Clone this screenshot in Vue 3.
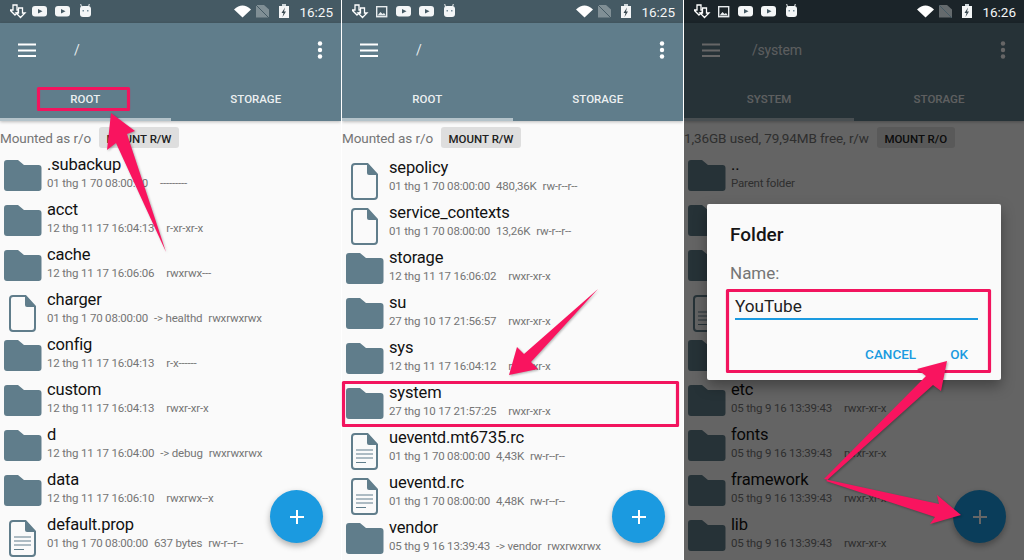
<template>
  <div class="shots">
    <section v-for="p in panels" :key="p.id" class="phone">
      <div class="statusbar" :class="{ dim: p.dialog }">
        <div class="notif">
          <template v-for="(ic, i) in p.icons" :key="i">
            <svg v-if="ic === 'dl'" width="22" height="23" viewBox="0 0 22 23">
              <path d="M3 5h4v5h3l-5 5-5-5h3z" fill="none" stroke="#fff" stroke-width="1.3" />
              <path d="M8.500 8h4v5h2.500l-4.500 4.500-4.500-4.500h2.500z" :fill="p.dialog ? '#1b2429' : '#455a64'" stroke="#fff" stroke-width="1.3" />
            </svg>
            <svg v-else-if="ic === 'img'" width="22" height="23" viewBox="0 0 22 23">
              <rect x="2.700" y="6.700" width="10" height="10" fill="none" stroke="#e8ecee" stroke-width="1.400" />
              <path d="M3.500 15.500l3-3.500 2 2 1.500-1 2 2.500z" fill="#e8ecee" />
            </svg>
            <svg v-else-if="ic === 'yt'" width="23" height="23" viewBox="0 0 23 23">
              <rect x="0" y="6" width="15" height="10.500" rx="3" fill="#f4f6f7" />
              <path d="M6 9l4.500 2.300L6 13.600z" fill="#455a64" />
            </svg>
            <svg v-else width="14" height="23" viewBox="0 0 14 23">
              <path d="M3.500 7L2.700 4M10.500 7l.8-3" stroke="#eef1f2" stroke-width="1" />
              <rect x="2" y="6" width="11" height="11" rx="3" fill="#f4f6f7" />
              <rect x="4.500" y="10" width="1.500" height="1.500" fill="#78909c" />
              <rect x="9" y="10" width="1.500" height="1.500" fill="#78909c" />
            </svg>
          </template>
        </div>
        <div class="sysicons">
          <svg width="55" height="23" viewBox="0 0 55 23">
            <path d="M0 9.500Q8.500 1.500 17 9.500L8.500 17.500z" fill="#fff" />
            <path d="M22 5h8l5 4.500V17.500H22z" fill="#fff" opacity=".32" />
            <path d="M22 5l13 13" stroke="#455a64" stroke-width="1" />
            <rect x="48" y="4" width="4" height="2" fill="#cfd8dc" />
            <rect x="45" y="6" width="10" height="12" fill="#f4f6f7" />
            <path d="M51 7.500l-3.500 5.500h2l-1 4 3.500-5.500h-2z" fill="#37474f" />
          </svg>
          <span class="clock">{{ p.time }}</span>
        </div>
      </div>

      <div class="body">
        <header class="appbar">
          <div class="toolbar">
            <svg class="burger" width="18" height="14" viewBox="0 0 18 14">
              <path d="M0 1.500h18M0 7.500h18M0 13h18" stroke="#fff" stroke-width="2" />
            </svg>
            <span class="path" :class="{ rootpath: p.path === '/' }">{{ p.path }}</span>
            <svg class="dots" width="6" height="18" viewBox="0 0 6 18">
              <circle cx="3" cy="2.500" r="2.200" fill="#fff" />
              <circle cx="3" cy="9" r="2.200" fill="#fff" />
              <circle cx="3" cy="15.500" r="2.200" fill="#fff" />
            </svg>
          </div>
          <div class="tabs">
            <div class="tab active">{{ p.tab }}</div>
            <div class="tab">STORAGE</div>
          </div>
        </header>

        <div class="mountbar">
          <span class="mountinfo">{{ p.info }}</span>
          <button class="mountbtn">{{ p.btn }}</button>
        </div>

        <ul class="list" :class="{ scrolled: p.id === 2 }">
          <li v-for="(r, i) in p.rows" :key="i" class="row">
            <div class="rowicon">
              <svg v-if="r.type === 'dir'" width="38" height="31" viewBox="0 0 38 31">
                <path d="M3 0h11l6 5h14.500a3 3 0 0 1 3 3v20a3 3 0 0 1-3 3H3a3 3 0 0 1-3-3V3a3 3 0 0 1 3-3z" fill="#607d8b" />
              </svg>
              <svg v-else class="fileicon" width="27" height="37" viewBox="0 0 27 37">
                <path d="M4 1h12.500L26 11.500V33a3 3 0 0 1-3 3H4a3 3 0 0 1-3-3V4a3 3 0 0 1 3-3z" fill="none" stroke="#607d8b" stroke-width="2" />
                <path d="M16 1l10 11h-8a2 2 0 0 1-2-2z" fill="#607d8b" />
                <path v-if="r.type === 'doc'" d="M5 17h17M5 21h17M5 25h17M5 29.500h10" stroke="#607d8b" stroke-width="1.200" />
              </svg>
            </div>
            <div v-if="r.name" class="rowtext">
              <div class="name">{{ r.name }}</div>
              <div class="meta">
                <span>{{ r.date }}</span>
                <span v-if="r.size !== null">{{ r.size }}</span>
                <span>{{ r.perm }}</span>
              </div>
            </div>
          </li>
        </ul>

        <button class="fab">
          <svg width="16" height="16" viewBox="0 0 16 16">
            <path d="M8 1v14M1 8h14" stroke="#fff" stroke-width="2" />
          </svg>
        </button>

        <template v-if="p.dialog">
          <div class="scrim"></div>
          <div class="dialog">
            <h3 class="dlgtitle">Folder</h3>
            <div class="dlglabel">Name:</div>
            <div class="dlgfield">YouTube</div>
            <div class="dlgactions">
              <span>CANCEL</span>
              <span>OK</span>
            </div>
          </div>
        </template>
      </div>
    </section>

    <svg class="marks" width="1024" height="560" viewBox="0 0 1024 560">
      <g fill="none" stroke="#f2145e" stroke-width="3.200" stroke-linejoin="round">
        <rect x="38.500" y="88.500" width="90" height="21" />
        <rect x="343.500" y="382.500" width="334" height="43" />
        <rect x="727.500" y="290.500" width="262" height="81" />
      </g>
      <g fill="#f9145f" class="arrows">
        <polygon points="111,113 135,131 127,134 166,252 116,143 107,150" />
        <polygon points="509,375 517,347 524,354 598,289 531,362 538,369" />
        <polygon points="947,361 917,369 926,376 824,479 939,504 937,495 961,515 930,524 935,517 826,481 933,385 941,391" />
      </g>
    </svg>
  </div>
</template>

<script setup>
const dir = (name, date, perm, size = '') => ({ type: 'dir', name, date, perm, size })
const file = (name, date, size, perm) => ({ type: 'file', name, date, perm, size })
const doc = (name, date, size, perm) => ({ type: 'doc', name, date, perm, size })

const epoch = '01 thg 1 70 08:00:00'
const sys = '05 thg 9 16 13:39:43'

const panels = [
  {
    id: 1,
    icons: ['dl', 'yt', 'yt', 'bot'],
    time: '16:25',
    path: '/',
    tab: 'ROOT',
    info: 'Mounted as r/o',
    btn: 'MOUNT R/W',
    rows: [
      dir('.subackup', epoch, '---------'),
      dir('acct', '12 thg 11 17 16:04:13', 'r-xr-xr-x'),
      dir('cache', '12 thg 11 17 16:06:06', 'rwxrwx---'),
      file('charger', epoch, '-> healthd', 'rwxrwxrwx'),
      dir('config', '12 thg 11 17 16:04:13', 'r-x------'),
      dir('custom', '12 thg 11 17 16:04:13', 'rwxr-xr-x'),
      dir('d', '12 thg 11 17 16:04:00', 'rwxrwxrwx', '-> debug'),
      dir('data', '12 thg 11 17 16:06:10', 'rwxrwx--x'),
      doc('default.prop', epoch, '637 bytes', 'rw-r--r--')
    ]
  },
  {
    id: 2,
    icons: ['dl', 'img', 'yt', 'yt', 'bot'],
    time: '16:25',
    path: '/',
    tab: 'ROOT',
    info: 'Mounted as r/o',
    btn: 'MOUNT R/W',
    rows: [
      file('sepolicy', epoch, '480,36K', 'rw-r--r--'),
      file('service_contexts', epoch, '13,26K', 'rw-r--r--'),
      dir('storage', '12 thg 11 17 16:06:02', 'rwxr-xr-x'),
      dir('su', '27 thg 10 17 21:56:57', 'rwxr-xr-x'),
      dir('sys', '12 thg 11 17 16:04:12', 'rwxr-xr-x'),
      dir('system', '27 thg 10 17 21:57:25', 'rwxr-xr-x'),
      doc('ueventd.mt6735.rc', epoch, '4,43K', 'rw-r--r--'),
      doc('ueventd.rc', epoch, '4,48K', 'rw-r--r--'),
      dir('vendor', sys, 'rwxrwxrwx', '-> vendor')
    ]
  },
  {
    id: 3,
    dialog: true,
    icons: ['dl', 'img', 'yt', 'yt', 'bot'],
    time: '16:26',
    path: '/system',
    tab: 'SYSTEM',
    info: '1,36GB used, 79,94MB free, r/w',
    btn: 'MOUNT R/O',
    rows: [
      { type: 'dir', name: '..', date: 'Parent folder', perm: '', size: null },
      { type: 'dir' },
      { type: 'dir' },
      { type: 'doc' },
      { type: 'dir' },
      dir('etc', sys, 'rwxr-xr-x'),
      dir('fonts', sys, 'rwxr-xr-x'),
      dir('framework', sys, 'rwxr-xr-x'),
      dir('lib', sys, 'rwxr-xr-x')
    ]
  }
]
</script>

<style>
html,
body {
  margin: 0;
  background: #fff;
}
</style>

<style scoped>
.shots {
  position: relative;
  display: grid;
  grid-template-columns: 341px 341px 340px;
  gap: 1px;
  width: 1024px;
  height: 560px;
  overflow: hidden;
  background: #fff;
  font-family: Roboto, "Liberation Sans", sans-serif;
}

.phone {
  display: flex;
  flex-direction: column;
  height: 560px;
  overflow: hidden;
  background: #fafafa;
}

.statusbar {
  display: flex;
  flex: none;
  justify-content: space-between;
  height: 23px;
  padding: 0 8px 0 10px;
  background: #455a64;
  color: #f4f6f7;
}

.statusbar.dim {
  background: #1b2429;
}

.notif,
.sysicons {
  display: flex;
}

.clock {
  margin-left: 10px;
  font-size: 13.500px;
  line-height: 24px;
}

.body {
  position: relative;
  flex: 1;
}

.appbar {
  position: relative;
  z-index: 1;
  background: #607d8b;
  box-shadow: 0 1px 3px rgba(0, 0, 0, .25);
  color: #fff;
}

.toolbar {
  display: flex;
  align-items: center;
  height: 54px;
  padding: 0 18px;
}

.burger {
  flex: none;
}

.path {
  flex: 1;
  margin-left: 32px;
  font-size: 14px;
  letter-spacing: -.2px;
  color: rgba(255, 255, 255, .85);
}

.rootpath {
  padding-left: 6px;
}

.tabs {
  display: flex;
}

.tab {
  box-sizing: border-box;
  width: 50%;
  height: 44px;
  padding-top: 3px;
  border-bottom: 3px solid transparent;
  font-size: 11.500px;
  font-weight: 500;
  line-height: 38px;
  text-align: center;
  color: rgba(255, 255, 255, .9);
}

.tab.active {
  border-bottom-color: #b4c3ca;
}

.mountbar {
  display: flex;
  align-items: center;
  gap: 8px;
  height: 21px;
  padding-top: 6px;
  padding-bottom: 2px;
}

.mountinfo {
  padding-top: 1px;
  font-size: 13.500px;
  letter-spacing: -.1px;
  color: #757575;
  white-space: nowrap;
}

.mountbtn {
  flex: none;
  height: 21px;
  padding: 2px 7.500px 0;
  border: 0;
  border-radius: 3px;
  background: #dedede;
  font: 500 11.500px Roboto, "Liberation Sans", sans-serif;
  color: #212121;
}

.list {
  margin: 0;
  padding: 0;
  list-style: none;
}

.list.scrolled {
  margin-top: 3px;
}

.row {
  display: flex;
  height: 45px;
}

.rowicon {
  flex: none;
  box-sizing: border-box;
  width: 47px;
  padding: 10px 0 0 4px;
}

.fileicon {
  margin-left: 5px;
}

.rowtext {
  padding-top: 5px;
}

.name {
  font-size: 16.500px;
  letter-spacing: -.17px;
  line-height: 20px;
  color: #111;
}

.meta {
  display: flex;
  gap: 6px;
  font-size: 11.500px;
  letter-spacing: -.18px;
  line-height: 17px;
  color: #757575;
  white-space: nowrap;
}

.fab {
  position: absolute;
  right: 18px;
  bottom: 17px;
  display: flex;
  align-items: center;
  justify-content: center;
  width: 53px;
  height: 53px;
  padding: 0;
  border: 0;
  border-radius: 50%;
  background: #1b9ae0;
  box-shadow: 0 3px 6px rgba(0, 0, 0, .3);
}

.scrim {
  position: absolute;
  inset: 0;
  z-index: 2;
  background: rgba(0, 0, 0, .6);
}

.dialog {
  position: absolute;
  top: 181px;
  left: 23px;
  z-index: 3;
  box-sizing: border-box;
  width: 294px;
  height: 176px;
  padding: 19px 23px 0;
  border-radius: 2px;
  background: #fafafa;
  box-shadow: 0 6px 14px rgba(0, 0, 0, .35);
}

.dlgtitle {
  margin: 0;
  font-size: 19px;
  font-weight: 500;
  line-height: 24px;
  color: #151515;
}

.dlglabel {
  margin-top: 16px;
  font-size: 17px;
  line-height: 20px;
  color: #757575;
}

.dlgfield {
  margin: 11px 0 0 5px;
  border-bottom: 2px solid #1b9ae0;
  font-size: 17.200px;
  line-height: 24px;
  color: #212121;
}

.dlgactions {
  display: flex;
  justify-content: flex-end;
  gap: 34px;
  margin-top: 24px;
  padding-right: 10px;
  font-size: 13.500px;
  font-weight: 500;
  line-height: 20px;
  color: #1b9ae0;
}

.marks {
  position: absolute;
  top: 0;
  left: 0;
  z-index: 5;
  pointer-events: none;
}

.arrows {
  filter: drop-shadow(1px 1px 1px rgba(0, 0, 0, .3));
}
</style>
